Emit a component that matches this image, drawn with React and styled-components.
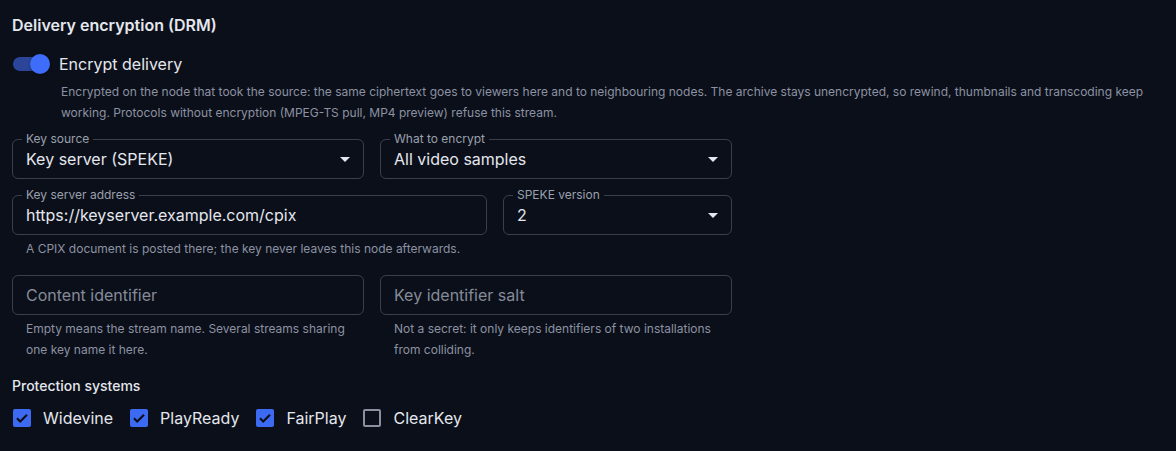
import React from 'react';
import styled, { createGlobalStyle } from 'styled-components';

const GlobalStyle = createGlobalStyle`
  html, body {
    margin: 0;
    background: #0b0f19;
  }
  body {
    font-family: Inter, "Noto Sans", sans-serif;
    color: #e4e7ee;
  }
`;

const Page = styled.div`
  padding: 13px 12px 20px;
  min-height: 451px;
  box-sizing: border-box;
`;

const Title = styled.h2`
  margin: 0;
  font-size: 16px;
  line-height: 24px;
  font-weight: 600;
`;

const SwitchRow = styled.label`
  display: flex;
  align-items: center;
  gap: 12px;
  height: 24px;
  margin-top: 15px;
  font-size: 16px;
`;

const Track = styled.span`
  position: relative;
  display: inline-block;
  width: 34px;
  height: 14px;
  margin-left: 1px;
  border-radius: 7px;
  background: ${props => (props.$on ? '#2b4699' : '#555b68')};
`;

const Thumb = styled.span`
  position: absolute;
  top: -3px;
  left: ${props => (props.$on ? '17px' : '-3px')};
  width: 20px;
  height: 20px;
  border-radius: 50%;
  background: ${props => (props.$on ? '#3e6cfb' : '#c8ccd4')};
  box-shadow: 0 1px 3px rgba(0, 0, 0, 0.4);
`;

const Description = styled.p`
  margin: 5px 0 0 49px;
  font-size: 12px;
  line-height: 21px;
  color: #8c92a3;
`;

const Grid = styled.div`
  display: grid;
  grid-template-columns: ${props => props.$cols};
  column-gap: 16px;
  width: 720px;
  margin-top: ${props => props.$top}px;
`;

const Cell = styled.div`
  display: flex;
  flex-direction: column;
  min-width: 0;
`;

const Box = styled.div`
  position: relative;
  display: flex;
  align-items: center;
  height: 40px;
  box-sizing: border-box;
  padding: 0 13px;
  border: 1px solid #3a3f4c;
  border-radius: 6px;
  font-size: 16px;
  color: ${props => (props.$placeholder ? '#858b99' : '#e4e7ee')};
`;

const Legend = styled.span`
  position: absolute;
  top: -8px;
  left: 9px;
  padding: 0 4px;
  background: #0b0f19;
  font-size: 12px;
  line-height: 14px;
  color: #9aa0ad;
`;

const Value = styled.span`
  flex: 1;
  white-space: nowrap;
  overflow: hidden;
`;

const Arrow = styled.svg`
  width: 24px;
  height: 24px;
  margin-right: -7px;
  fill: #e4e7ee;
`;

const Helper = styled.p`
  margin: 3px 14px 0;
  font-size: 12px;
  line-height: 21px;
  color: #8c92a3;
`;

const SectionLabel = styled.div`
  margin-top: 16px;
  font-size: 14px;
  line-height: 20px;
  font-weight: 500;
`;

const CheckRow = styled.div`
  display: flex;
  align-items: center;
  gap: 16px;
  height: 24px;
  margin-top: 10px;
`;

const CheckItem = styled.label`
  display: flex;
  align-items: center;
  gap: 12px;
  font-size: 16px;
`;

const CheckBox = styled.span`
  display: flex;
  align-items: center;
  justify-content: center;
  width: 18px;
  height: 18px;
  margin-left: 1px;
  box-sizing: border-box;
  border-radius: 2px;
  background: ${props => (props.$on ? '#3d6af2' : 'transparent')};
  border: ${props => (props.$on ? 'none' : '2px solid #8a90a0')};
`;

const Field = ({ label, value, placeholder, select }) => (
  <Box $placeholder={!value}>
    {label && <Legend>{label}</Legend>}
    <Value>{value || placeholder}</Value>
    {select && (
      <Arrow viewBox="0 0 24 24">
        <path d="M7 10l5 5 5-5z" />
      </Arrow>
    )}
  </Box>
);

const Check = ({ on, children }) => (
  <CheckItem>
    <CheckBox $on={on}>
      {on && (
        <svg width="16" height="16" viewBox="0 0 24 24">
          <path
            d="M4.5 12.5l4.8 4.8L19.5 7"
            fill="none"
            stroke="#0b0f19"
            strokeWidth="3.2"
          />
        </svg>
      )}
    </CheckBox>
    {children}
  </CheckItem>
);

export default function App() {
  return (
    <Page>
      <GlobalStyle />
      <Title>Delivery encryption (DRM)</Title>
      <SwitchRow>
        <Track $on>
          <Thumb $on />
        </Track>
        Encrypt delivery
      </SwitchRow>
      <Description>
        Encrypted on the node that took the source: the same ciphertext goes to
        viewers here and to neighbouring nodes. The archive stays unencrypted,
        so rewind, thumbnails and transcoding keep working. Protocols without
        encryption (MPEG-TS pull, MP4 preview) refuse this stream.
      </Description>

      <Grid $cols="1fr 1fr" $top={16}>
        <Field label="Key source" value="Key server (SPEKE)" select />
        <Field label="What to encrypt" value="All video samples" select />
      </Grid>

      <Grid $cols="475px 229px" $top={16}>
        <Cell>
          <Field
            label="Key server address"
            value="https://keyserver.example.com/cpix"
          />
          <Helper>
            A CPIX document is posted there; the key never leaves this node
            afterwards.
          </Helper>
        </Cell>
        <Cell>
          <Field label="SPEKE version" value="2" select />
        </Cell>
      </Grid>

      <Grid $cols="1fr 1fr" $top={16}>
        <Cell>
          <Field placeholder="Content identifier" />
          <Helper>
            Empty means the stream name. Several streams sharing one key name
            it here.
          </Helper>
        </Cell>
        <Cell>
          <Field placeholder="Key identifier salt" />
          <Helper>
            Not a secret: it only keeps identifiers of two installations from
            colliding.
          </Helper>
        </Cell>
      </Grid>

      <SectionLabel>Protection systems</SectionLabel>
      <CheckRow>
        <Check on>Widevine</Check>
        <Check on>PlayReady</Check>
        <Check on>FairPlay</Check>
        <Check>ClearKey</Check>
      </CheckRow>
    </Page>
  );
}
